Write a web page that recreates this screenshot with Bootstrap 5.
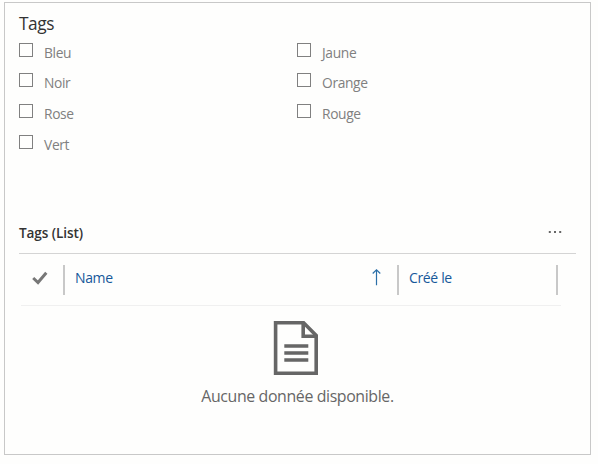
<!DOCTYPE html>
<html lang="fr">
<head>
<meta charset="utf-8">
<meta name="viewport" content="width=device-width, initial-scale=1">
<title>Tags</title>
<link rel="stylesheet" href="https://cdn.jsdelivr.net/npm/bootstrap@5.3.0/dist/css/bootstrap.min.css">
<style>
body{background:#fefefd;font-family:"Open Sans","Noto Sans",sans-serif;height:464px;overflow:hidden;white-space:nowrap}
.panel{width:587px;height:453px;margin:2px 0 0 4px;border:1px solid #c8c8c8;padding:9px 14px 0}
.panel-title{font-size:17.3px;line-height:24px;height:31px;color:#333;font-weight:400;letter-spacing:-.45px}
.tag-grid{grid-template-columns:278px 1fr;grid-template-rows:30px 31px 31px 88px}
.tag-item{gap:11px;font-size:13.8px;line-height:20px;color:#808080;letter-spacing:-.35px}
.tag-item .form-check-input{width:14px;height:14px;border:1px solid #808080;border-radius:0;background:#fefefd}
.list-head{height:31px;border-bottom:1px solid #d4d4d4;color:#333;width:557px}
.list-title{font-size:13.6px;line-height:20px;font-weight:600;letter-spacing:-.1px}
.list-cols{width:540px;margin-left:2px;height:52px;border-bottom:1px solid #f0f0f0;padding:11px 2px 0 0;color:#17589a;font-size:14px}
.cell{height:30px;border-right:2px solid #c8c8c8;line-height:26px;letter-spacing:-.35px}
.cell-check{width:44px;padding:6px 0 0 11px}
.cell-name{width:334px;padding:0 16px 0 10px}
.cell-date{width:159px;padding-left:10px}
.empty{width:557px;padding-top:15px;color:#666}
.empty-icon{margin-left:254px}
.empty-text{font-size:15.9px;line-height:24px;margin-top:9px;letter-spacing:-.38px}
</style>
</head>
<body>
<main class="panel">
  <h1 class="panel-title mb-0">Tags</h1>
  <div class="tag-grid d-grid">
    <label class="tag-item d-flex"><input type="checkbox" class="form-check-input m-0"><span>Bleu</span></label>
    <label class="tag-item d-flex"><input type="checkbox" class="form-check-input m-0"><span>Jaune</span></label>
    <label class="tag-item d-flex"><input type="checkbox" class="form-check-input m-0"><span>Noir</span></label>
    <label class="tag-item d-flex"><input type="checkbox" class="form-check-input m-0"><span>Orange</span></label>
    <label class="tag-item d-flex"><input type="checkbox" class="form-check-input m-0"><span>Rose</span></label>
    <label class="tag-item d-flex"><input type="checkbox" class="form-check-input m-0"><span>Rouge</span></label>
    <label class="tag-item d-flex"><input type="checkbox" class="form-check-input m-0"><span>Vert</span></label>
  </div>
  <section>
    <div class="list-head d-flex justify-content-between">
      <h2 class="list-title mb-0">Tags (List)</h2>
      <svg class="mt-2" width="28" height="4" fill="#666" aria-label="Plus"><path d="M.8 0h2v2h-2zM6 0h2v2h-2zM11.200 0h2v2h-2z"/></svg>
    </div>
    <div class="list-cols d-flex">
      <div class="cell cell-check"><svg class="d-block" width="16" height="15" viewBox="0 0 16 15"><path d="M1.200 7 6 11.500 14.300 1.800" fill="none" stroke="#777" stroke-width="3"/></svg></div>
      <div class="cell cell-name d-flex justify-content-between"><span>Name</span><svg class="mt-1" width="9" height="17" viewBox="0 0 9 17"><path d="M4.500 16.300V1M.7 4.500 4.500 .9 8.300 4.500" fill="none" stroke="#2b6fa8" stroke-width="1.200"/></svg></div>
      <div class="cell cell-date">Créé le</div>
    </div>
    <div class="empty">
      <svg class="empty-icon d-block" width="46" height="54" viewBox="0 0 46 54" fill="none" stroke="#666" stroke-width="3.600"><path d="M2.600 1.800h28L43.200 14.600v37.600H2.600z"/><path d="M30.200 2v13.200h13M11.300 25h24M11.300 32h24M11.300 39h24"/></svg>
      <div class="empty-text text-center">Aucune donnée disponible.</div>
    </div>
  </section>
</main>
<script src="https://cdn.jsdelivr.net/npm/bootstrap@5.3.0/dist/js/bootstrap.bundle.min.js"></script>
</body>
</html>
